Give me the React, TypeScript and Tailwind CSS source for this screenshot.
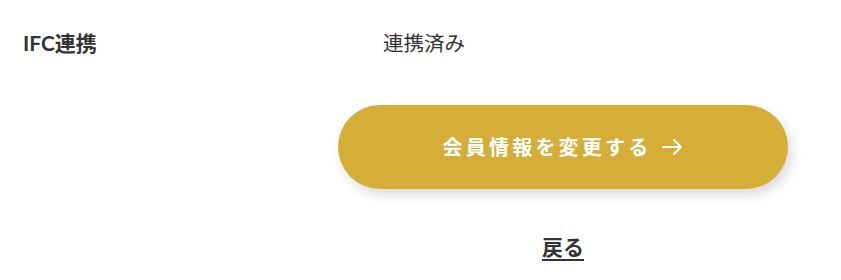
import React from "react";

export default function App() {
  return (
    <div
      className="w-[841px] h-[280px] bg-white text-[#333333] overflow-hidden"
      style={{ fontFamily: '"Lato", "Noto Sans CJK JP", sans-serif' }}
    >
      <div className="flex items-center pt-[29px] h-[57px]">
        <div className="w-[383px] pl-[23px] text-[21px] font-bold leading-[28px]">IFC連携</div>
        <div className="text-[20.5px] leading-[28px]">連携済み</div>
      </div>
      <div className="pl-[338px] pt-[48px]">
        <button className="w-[450px] h-[84px] rounded-full bg-[#d4ae37] text-white shadow-[4px_6px_12px_rgba(0,0,0,0.14)] flex items-center justify-center">
          <span className="text-[20px] font-bold tracking-[0.16em] leading-none">会員情報を変更する</span>
          <svg className="ml-[10px] w-[22px] h-[22px]" viewBox="0 0 22 22" fill="none" stroke="white" strokeWidth="2" strokeLinecap="round" strokeLinejoin="round">
            <path d="M2 11h18M13 4l7 7-7 7" />
          </svg>
        </button>
      </div>
      <div className="pl-[338px] w-[788px] flex justify-center pt-[44px]">
        <a className="text-[21px] font-bold underline underline-offset-[4px] decoration-2 leading-[28px] text-[#333333]">戻る</a>
      </div>
    </div>
  );
}
